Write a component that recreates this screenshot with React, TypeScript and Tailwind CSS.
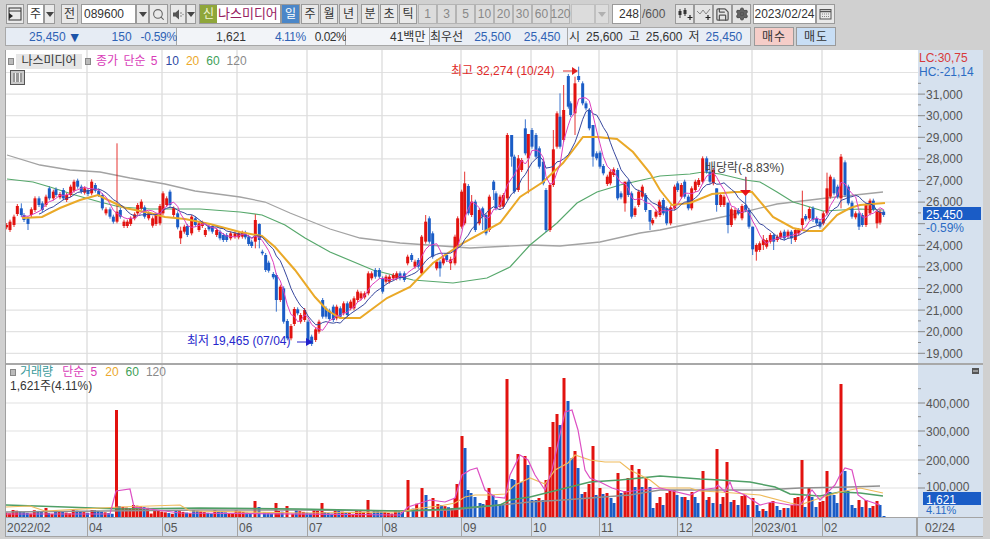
import { Search, Save, Settings } from "lucide-react";
import type { ReactNode } from "react";

type Row = [number, number, number, "r" | "b", number?, number?];

const RED = "#e2120f";
const BLUE = "#1a5cc6";

// candle tables are in 3x zoom coordinates of each chart slice
const LEFT: Row[] = [
  [20, 315, 322, "r"], [30, 305, 330, "r"], [42, 290, 315, "r"], [52, 258, 282, "r"], [64, 265, 285, "b", 250], [72, 285, 300, "b"],
  [84, 295, 312, "b", 290, 330], [94, 268, 285, "r"], [105, 235, 270, "r"], [117, 235, 255, "b"], [127, 250, 270, "b"], [138, 230, 255, "r"],
  [148, 205, 235, "b"], [160, 215, 235, "r"], [168, 208, 225, "b"], [180, 222, 232, "r"], [190, 210, 235, "b"], [200, 225, 240, "r"],
  [212, 200, 225, "r"], [222, 185, 212, "r"], [233, 182, 200, "b"], [244, 200, 215, "b"], [254, 205, 218, "r"], [264, 210, 222, "b"],
  [275, 185, 220, "r", 178], [286, 195, 212, "b"], [296, 212, 225, "b"], [307, 225, 265, "b"], [318, 268, 280, "r"], [330, 268, 290, "b"],
  [340, 290, 305, "b"], [351, 275, 305, "r", 70, 310], [361, 270, 290, "b"], [372, 305, 318, "r"], [382, 305, 318, "r"], [392, 295, 312, "r"],
  [404, 283, 295, "r"], [413, 255, 280, "r"], [424, 245, 265, "r", 238], [434, 262, 290, "b"], [446, 280, 295, "r"], [458, 295, 317, "r"],
  [468, 285, 312, "r"], [480, 258, 310, "r"], [489, 220, 280, "r"], [500, 235, 255, "r"], [510, 215, 255, "b"], [521, 265, 285, "r"],
  [533, 280, 322, "b"], [542, 332, 355, "r", 320, 372], [553, 320, 335, "r"], [562, 318, 345, "b"], [575, 290, 340, "r", 285], [586, 295, 315, "b"],
  [597, 310, 330, "r"], [607, 308, 318, "r"], [616, 330, 345, "r"], [627, 318, 328, "b"], [637, 318, 335, "b"], [650, 330, 345, "r"],
  [660, 335, 355, "b"], [670, 345, 360, "b"], [680, 345, 360, "b"], [692, 340, 355, "r"], [705, 340, 350, "r"], [716, 340, 352, "r"],
  [727, 338, 350, "r"], [736, 338, 352, "b"], [746, 350, 372, "b"], [755, 365, 378, "b"], [766, 300, 365, "r", 283, 385], [778, 312, 360, "b", 310, 385],
  [787, 395, 400, "b"], [797, 405, 450, "b"], [806, 428, 452, "b"], [820, 462, 472, "b"], [829, 465, 540, "b", 460, 575], [841, 500, 540, "r"],
  [851, 505, 605, "b"], [862, 603, 655, "b"], [873, 618, 655, "r"], [883, 567, 612, "r"], [893, 568, 580, "b"], [902, 585, 605, "r"],
  [914, 570, 600, "r"], [924, 605, 660, "b"], [935, 650, 672, "b"], [947, 628, 660, "r"], [957, 605, 635, "r"], [968, 540, 590, "b"],
  [978, 565, 590, "b"], [988, 572, 597, "b"],
];

const MIDDLE: Row[] = [
  [10, 740, 780, "b"], [20, 740, 775, "r"], [31, 745, 770, "b"], [41, 730, 760, "r"], [52, 730, 765, "b"], [62, 725, 745, "r"],
  [72, 715, 745, "r"], [83, 695, 720, "r"], [93, 700, 715, "r"], [104, 700, 712, "r"], [115, 640, 700, "r"], [125, 640, 655, "r"],
  [136, 630, 650, "b"], [148, 630, 650, "b"], [158, 655, 695, "b"], [168, 650, 665, "r"], [178, 650, 665, "r"], [190, 645, 655, "r"],
  [200, 640, 655, "r"], [210, 640, 655, "b"], [223, 640, 660, "b"], [233, 590, 610, "r"], [245, 585, 600, "b"], [255, 605, 620, "r"],
  [265, 600, 620, "b"], [275, 530, 640, "r", 525], [287, 485, 545, "r", 465], [298, 475, 545, "b"], [308, 520, 590, "b"], [320, 605, 625, "r"],
  [330, 605, 625, "b", 600, 650], [340, 595, 610, "r"], [350, 585, 600, "b"], [362, 598, 610, "r", 590, 630], [375, 530, 610, "r"], [383, 475, 560, "r"],
  [395, 395, 500, "r"], [404, 370, 490, "r", 335], [415, 378, 460, "b"], [425, 425, 465, "r", 405], [436, 425, 510, "b"], [448, 450, 490, "r"],
  [458, 445, 470, "b", 440, 510], [468, 465, 520, "b"], [478, 410, 510, "r"], [491, 365, 390, "b", 360, 420], [498, 400, 445, "b"], [510, 410, 440, "r"],
  [520, 405, 440, "r"], [532, 225, 415, "r"], [545, 225, 290, "b", 225, 320], [553, 290, 395, "b"], [565, 295, 390, "r", 285], [575, 300, 330, "r"],
  [586, 205, 280, "b", 178], [595, 222, 295, "r", 222, 400], [606, 210, 260, "b"], [618, 225, 290, "b"], [628, 265, 320, "b"], [640, 305, 370, "b"],
  [648, 390, 510, "b"], [660, 375, 510, "r"], [670, 268, 375, "r", 210], [681, 160, 260, "r"], [690, 170, 260, "b", 100], [701, 150, 240, "r", 75],
  [715, 48, 140, "b"], [722, 130, 165, "b"], [735, 70, 160, "r", 50, 225], [746, 48, 60, "b", 20], [758, 70, 130, "b"], [768, 130, 145, "b"],
  [778, 150, 205, "b"], [789, 195, 290, "b", 195, 320], [800, 280, 295, "b"], [810, 278, 320, "b"], [820, 318, 340, "b"], [832, 350, 372, "r"],
  [841, 335, 370, "r"], [851, 328, 345, "r"], [863, 330, 415, "b"], [873, 400, 412, "b"], [885, 365, 430, "r", 365, 455], [895, 365, 405, "b"],
  [905, 400, 470, "b"], [915, 445, 465, "r"], [926, 395, 435, "r"], [937, 380, 410, "r"], [947, 405, 450, "b"], [960, 450, 485, "b", 450, 510],
  [968, 480, 490, "r"], [978, 455, 470, "r"], [988, 425, 445, "r"],
];

const RIGHT: Row[] = [
  [0, 225, 255, "r"], [10, 210, 250, "b"], [20, 235, 280, "b"], [32, 232, 280, "r"], [44, 170, 235, "r"], [53, 160, 180, "b"],
  [64, 165, 200, "r"], [74, 155, 200, "b"], [85, 200, 235, "b"], [95, 175, 235, "r"], [106, 155, 180, "r"], [116, 150, 165, "r"],
  [128, 85, 155, "r"], [140, 85, 125, "b"], [150, 125, 155, "b"], [160, 120, 160, "r"], [170, 175, 225, "b", 175, 245], [182, 195, 225, "r"],
  [192, 200, 225, "r"], [204, 218, 285, "b", 218, 310], [214, 238, 285, "r"], [225, 240, 265, "r"], [235, 240, 250, "b"], [246, 228, 265, "r"],
  [257, 225, 240, "b", 140], [267, 240, 290, "b"], [278, 290, 358, "b", 290, 375], [289, 345, 365, "r", 340, 392], [299, 340, 360, "r"], [310, 328, 345, "r", 315, 360],
  [320, 330, 350, "r"], [331, 315, 335, "r"], [341, 315, 335, "b", 310, 360], [352, 320, 330, "r"], [362, 308, 322, "r"], [373, 305, 325, "b"],
  [384, 305, 318, "r"], [394, 305, 325, "b", 300, 342], [406, 300, 330, "r"], [416, 300, 310, "r"], [427, 265, 285, "r", 182, 300], [437, 258, 268, "b"],
  [448, 237, 265, "r"], [459, 235, 270, "b"], [470, 265, 280, "b"], [480, 275, 290, "b"], [490, 250, 280, "r"], [501, 175, 250, "r", 128],
  [511, 140, 200, "r"], [522, 148, 190, "b"], [533, 170, 200, "b"], [543, 80, 205, "r", 72, 235], [555, 97, 195, "b"], [565, 170, 220, "b"],
  [576, 218, 260, "b"], [587, 250, 262, "r"], [597, 250, 290, "b", 245, 300], [607, 255, 285, "b"], [618, 225, 285, "r"], [630, 212, 250, "r"],
  [640, 212, 238, "b"], [651, 245, 280, "r", 240, 295], [660, 245, 278, "r"], [671, 245, 255, "b"],
];

const toPx = (rows: Row[], ox: number, oy: number) =>
  rows.map(([z, top, bot, c, hi, lo]) => ({
    x: ox + z / 3,
    top: oy + top / 3,
    bot: oy + bot / 3,
    hi: oy + (hi ?? top - 6) / 3,
    lo: oy + (lo ?? bot + 6) / 3,
    c,
  }));

const CANDLES = [...toPx(LEFT, 0, 120), ...toPx(MIDDLE, 330, 60), ...toPx(RIGHT, 660, 130)];

function movingAverage(n: number) {
  const closes = CANDLES.map((k) => (k.c === "r" ? k.top : k.bot));
  const pts: string[] = [];
  closes.forEach((_, i) => {
    if (i < n - 1) return;
    const win = closes.slice(i - n + 1, i + 1);
    const avg = win.reduce((a, b) => a + b, 0) / n;
    pts.push(`${CANDLES[i].x.toFixed(1)},${avg.toFixed(1)}`);
  });
  return pts.join(" ");
}

const MA20 =
  "22,218 42,217 60,208 80,200 98,195 108,200 125,208 150,213 165,217 185,219 210,224 240,232 262,236 275,247 295,270 315,297 327,310 340,318 360,318 387,298 410,287 433,263 463,243 500,223 520,197 543,182 563,163 583,137 597,137 617,139 633,152 650,173 660,190 672,205 690,203 712,194 735,192 752,192 773,217 793,228 807,231 822,231 837,215 850,208 860,205 885,203";
const MA60 =
  "7,179 33,182 50,187 75,195 100,202 120,207 150,209 200,209 240,212 262,215 285,225 305,238 330,252 373,270 413,280 453,283 487,278 510,267 530,245 557,223 577,203 597,192 620,185 660,176 690,174 703,172 720,174 745,180 760,182 777,192 793,202 810,207 823,211 860,209 883,210";
const MA120 =
  "7,155 40,165 70,170 100,172 130,178 165,184 195,191 240,197 265,202 290,213 330,229 360,238 400,243 470,248 530,245 560,246 600,242 640,233 660,230 727,216 777,204 827,198 883,192";

const VOL_MA5 =
  "6,514 110,514 116,491 130,489 134,507 180,513 400,515 408,507 430,500 445,502 455,498 462,475 470,470 477,468 485,490 495,497 505,498 510,475 520,455 528,460 535,475 545,490 552,470 565,412 572,410 578,430 585,470 590,478 600,482 612,488 625,492 640,490 660,488 690,495 700,490 715,488 718,485 725,492 730,482 733,490 745,495 760,505 772,502 790,505 800,505 812,490 820,500 835,485 840,475 845,468 852,470 858,495 865,500 880,505";
const VOL_MA20 =
  "6,507 30,506 45,511 120,507 180,505 190,511 300,513 400,512 420,508 440,506 455,503 465,497 475,495 490,495 505,494 515,485 530,478 545,484 555,470 568,463 575,455 590,460 605,462 620,462 630,470 650,480 660,488 690,488 700,491 720,492 760,495 790,503 800,505 820,498 840,492 860,488 883,493";
const VOL_MA60 =
  "6,505 65,507 120,509 200,508 300,509 400,511 450,509 500,505 510,500 530,497 570,487 590,482 620,480 660,476 700,479 720,480 750,482 775,487 790,494 820,496 840,492 860,493 883,496";
const VOL_MA120 =
  "6,512 200,510 300,510 400,511 450,510 500,505 530,502 563,500 630,495 660,490 760,490 800,488 850,487 880,486";

// [x, top of bar, colour] read from the volume pane
const BIG_VOL: [number, number, "r" | "b"][] = [
  [116.5, 410, "r"], [46, 508, "r"], [92, 510, "r"], [255, 501, "r"], [259, 507, "b"], [276, 503, "r"], [287, 506, "r"], [322, 503, "r"],
  [368, 500, "r"], [408, 480, "r"], [422, 488, "r"], [426, 495, "b"], [433, 498, "r"], [455, 498, "r"], [457, 484, "r"], [462, 436, "r"], [465, 448, "b"],
  [468, 490, "b"], [471, 493, "b"], [475, 497, "b"], [480, 503, "b"], [483, 504, "b"], [487, 500, "r"], [489, 488, "r"], [493, 495, "b"], [496, 500, "b"],
  [500, 504, "b"], [503, 505, "b"], [507, 379, "r"], [512, 479, "b"], [514, 480, "b"], [518, 454, "r"], [521, 482, "b"], [525, 456, "r"], [528, 465, "b"],
  [532, 500, "b"], [536, 500, "b"], [539, 498, "r"], [543, 500, "b"], [546, 480, "r"], [550, 447, "r"], [553, 422, "r"], [557, 414, "r"], [560, 425, "b"],
  [564, 378, "r"], [568, 401, "b"], [572, 458, "b"], [575, 451, "r"], [578, 468, "b"], [582, 494, "b"], [585, 492, "r"], [589, 484, "r"], [593, 446, "r"],
  [596, 495, "b"], [600, 488, "r"], [603, 494, "b"], [607, 493, "r"], [611, 498, "b"], [614, 503, "b"], [618, 473, "r"], [621, 493, "b"], [625, 491, "r"],
  [628, 478, "r"], [632, 465, "r"], [635, 487, "b"], [639, 469, "r"], [642, 487, "b"], [646, 477, "r"], [650, 487, "b"], [653, 508, "b"], [657, 503, "r"],
  [660, 497, "r"], [663, 505, "b"], [667, 493, "r"], [670, 490, "r"], [674, 490, "r"], [677, 495, "b"], [682, 497, "b"], [685, 497, "r"], [688, 500, "b"],
  [692, 492, "r"], [695, 497, "b"], [698, 503, "b"], [703, 471, "r"], [707, 500, "b"], [709, 497, "r"], [713, 503, "b"], [717, 449, "r"], [721, 504, "b"],
  [723, 497, "r"], [727, 462, "r"], [731, 502, "b"], [734, 500, "r"], [738, 505, "b"], [742, 496, "r"], [745, 495, "r"], [748, 505, "b"], [753, 498, "r"],
  [757, 505, "b"], [759, 511, "b"], [763, 509, "r"], [766, 511, "b"], [770, 503, "r"], [773, 501, "r"], [777, 506, "b"], [780, 510, "b"], [784, 508, "r"],
  [788, 508, "b"], [792, 505, "r"], [795, 498, "r"], [798, 497, "r"], [802, 460, "r"], [805, 507, "b"], [809, 488, "r"], [812, 497, "b"], [816, 507, "b"],
  [820, 502, "r"], [823, 501, "r"], [827, 471, "r"], [830, 492, "b"], [834, 495, "b"], [837, 503, "b"], [841, 384, "r"], [845, 471, "b"], [848, 491, "b"],
  [852, 505, "b"], [855, 508, "b"], [859, 500, "r"], [862, 507, "b"], [866, 500, "r"], [870, 508, "b"], [873, 506, "r"], [877, 501, "r"], [880, 505, "b"],
  [884, 516, "b"],
];

const nearestColor = (x: number) =>
  CANDLES.reduce((best, k) => (Math.abs(k.x - x) < Math.abs(best.x - x) ? k : best), CANDLES[0]).c;

// the small bars between the ones read by hand
const FILLER = Array.from({ length: 249 }, (_, i) => {
  const x = 6 + i * 3.54;
  const noise = ((i * 37 + 11) % 17) / 17;
  let top = 510 + noise * 4;
  if (x > 118 && x < 150) top = 505 + noise * 4;
  if (x > 410 && x < 460) top = 503 + noise * 6;
  if (x > 460) top = 498 + noise * 8;
  return { x, top, c: nearestColor(x) };
}).filter((b) => b.x < 884 && !BIG_VOL.some(([x]) => Math.abs(x - b.x) < 2.2));

const VOLUMES = [...FILLER, ...BIG_VOL.map(([x, top, c]) => ({ x, top, c }))];

const VERTICALS = [87, 162, 237, 307, 382, 461, 531, 599, 677, 752, 822];
const PRICE_LINES = Array.from({ length: 14 }, (_, i) => ({ v: 32 - i, y: 72.5 + i * 21.6 }));
const VOL_LINES = [
  { label: "400,000", y: 403, text: 407.5 },
  { label: "300,000", y: 431, text: 435.5 },
  { label: "200,000", y: 460, text: 464.5 },
  { label: "100,000", y: 488, text: 490.5 },
];
const DATES = [
  { x: 87, t: "04" }, { x: 162, t: "05" }, { x: 237, t: "06" }, { x: 307, t: "07" }, { x: 382, t: "08" }, { x: 461, t: "09" },
  { x: 531, t: "10" }, { x: 599, t: "11" }, { x: 677, t: "12" }, { x: 752, t: "2023/01" }, { x: 822, t: "02" },
];

function Btn({ className, children }: { className: string; children?: ReactNode }) {
  return (
    <div className={`h-[20px] shrink-0 flex items-center justify-center border border-[#9a9a9a] bg-[#e9e9e9] text-[#333] text-[12px] leading-none ${className}`}>
      {children}
    </div>
  );
}

function Caret({ light }: { light?: boolean }) {
  return (
    <svg width="8" height="5" viewBox="0 0 8 5">
      <path d="M0 0h8L4 5z" fill={light ? "#b0b0b0" : "#444"} />
    </svg>
  );
}

function Toolbar() {
  return (
    <div className="h-[27px] pl-[6px] pt-[4px] flex items-start">
      <Btn className="w-[18px]">
        <svg width="14" height="14" viewBox="0 0 14 14" fill="none">
          <rect x="1" y="1" width="12" height="12" stroke="#333" />
          <path d="M1 4h12" stroke="#333" />
          <path d="M1 6l4 3-4 3z" fill="#222" />
        </svg>
      </Btn>
      <Btn className="w-[17px] ml-[3px] !bg-white">주</Btn>
      <Btn className="w-[11px]"><Caret /></Btn>
      <Btn className="w-[17px] ml-[6px]">전</Btn>
      <Btn className="w-[55px] ml-[3px] !bg-white !justify-start pl-[2px] text-[#222]">089600</Btn>
      <Btn className="w-[13px]"><Caret /></Btn>
      <Btn className="w-[19px]"><Search size={13} color="#666" /></Btn>
      <Btn className="w-[16px] ml-[2px]">
        <svg width="13" height="13" viewBox="0 0 13 13">
          <path d="M1 4.5h2.5L7 1.5v10L3.500 8.500H1z" fill="#555" />
          <circle cx="9" cy="5" r="0.8" fill="#777" /><circle cx="9" cy="8" r="0.8" fill="#777" /><circle cx="11" cy="6.500" r="0.8" fill="#999" />
        </svg>
      </Btn>
      <Btn className="w-[10px]"><Caret /></Btn>
      <div className="h-[20px] ml-[3px] flex border border-[#9a9a9a] shrink-0">
        <div className="w-[17px] bg-[#8fa63a] text-[#f2f6d8] text-[12px] flex items-center justify-center">신</div>
        <div className="w-[63px] bg-white text-[#97205f] text-[13px] flex items-center pl-[1px] overflow-hidden whitespace-nowrap">나스미디어</div>
      </div>
      <Btn className="w-[19px] !bg-[#4a86c8] !text-white">일</Btn>
      <Btn className="w-[18px] ml-[1px]">주</Btn>
      <Btn className="w-[18px] ml-[1px]">월</Btn>
      <Btn className="w-[19px] ml-[1px]">년</Btn>
      <Btn className="w-[18px] ml-[3px]">분</Btn>
      <Btn className="w-[18px] ml-[1px]">초</Btn>
      <Btn className="w-[18px] ml-[1px]">틱</Btn>
      <div className="w-[1px] shrink-0" />
      {["1", "3", "5", "10", "20", "30", "60", "120"].map((n) => (
        <Btn key={n} className="w-[19px] !text-[#888] !bg-[#dcdcdc] !border-[#b4b4b4]">{n}</Btn>
      ))}
      <Btn className="w-[24px] ml-[1px] !bg-[#dcdcdc] !border-[#c0c0c0]" />
      <Btn className="w-[14px] !bg-[#dcdcdc] !border-[#c0c0c0]"><Caret light /></Btn>
      <Btn className="w-[29px] ml-[3px] !bg-white !justify-end pr-[1px] text-[#222]">248</Btn>
      <div className="w-[34px] h-[20px] pl-[1px] text-[12px] text-[#555] flex items-center shrink-0">/600</div>
      <Btn className="w-[19px] !bg-[#e4e4e4]">
        <svg width="16" height="14" viewBox="0 0 16 14">
          <path d="M3 2v9M8 1v8" stroke="#333" />
          <rect x="1.500" y="4" width="3" height="4" fill="#333" /><rect x="6.500" y="3" width="3" height="4" fill="#333" />
          <path d="M13 8v5M10.500 10.500h5" stroke="#222" strokeWidth="1.200" />
        </svg>
      </Btn>
      <Btn className="w-[19px] !bg-[#e4e4e4]">
        <svg width="16" height="14" viewBox="0 0 16 14" fill="none">
          <path d="M1 4l3 3 3-4 3 4 4-5" stroke="#888" />
          <path d="M12 8v5M9.500 10.500h5" stroke="#222" strokeWidth="1.200" />
        </svg>
      </Btn>
      <Btn className="w-[19px] !bg-[#e4e4e4]"><Save size={15} color="#555" /></Btn>
      <Btn className="w-[19px] !bg-[#e4e4e4]"><Settings size={14} color="#555" fill="#666" /></Btn>
      <Btn className="w-[63px] ml-[2px] !bg-white text-[#222]">2023/02/24</Btn>
      <Btn className="w-[19px]">
        <svg width="13" height="12" viewBox="0 0 13 12" fill="none">
          <rect x="1" y="1.500" width="11" height="9.500" stroke="#555" />
          <path d="M1 3.500h11" stroke="#555" strokeWidth="1.500" />
          <path d="M3 6h7M3 8.500h7" stroke="#888" strokeDasharray="1 1" />
        </svg>
      </Btn>
    </div>
  );
}

function Cell({ className, children }: { className: string; children: ReactNode }) {
  return <div className={`h-full flex items-center whitespace-pre border-r border-[#a8a8a8] ${className}`}>{children}</div>;
}

function Quotes() {
  return (
    <div className="h-[20px] pl-[5px] flex text-[12px] text-[#333]">
      <div className="w-[746px] h-[19px] flex border border-[#a8a8a8] bg-[#e9eef5]">
        <Cell className="w-[171px] bg-[#e6ecf4] text-[#2f62b4]">
          <span className="ml-[23px]">25,450</span>
          <span className="ml-[2px] text-[#1c54a8] text-[14px] leading-none">▼</span>
          <span className="ml-[30px]">150</span>
          <span className="ml-[9px] tracking-[-0.3px]">-0.59%</span>
        </Cell>
        <Cell className="w-[169px] bg-[#f2f4f8]">
          <span className="ml-[39px]">1,621</span>
          <span className="ml-[29px] text-[#2f62b4] tracking-[-0.5px]">4.11%</span>
          <span className="ml-[9px] tracking-[-0.5px]">0.02%</span>
        </Cell>
        <Cell className="w-[84px] bg-[#f2f4f8]"><span className="ml-[44px]">41백만</span></Cell>
        <Cell className="w-[138px]">
          <span>최우선</span>
          <span className="ml-[11px] text-[#2f62b4]">25,500</span>
          <span className="ml-[13px] text-[#2f62b4]">25,450</span>
        </Cell>
        <div className="flex-1 h-full flex items-center whitespace-pre">
          <span className="ml-[1px]">시</span>
          <span className="ml-[6px]">25,600</span>
          <span className="ml-[6px]">고</span>
          <span className="ml-[6px]">25,600</span>
          <span className="ml-[6px]">저</span>
          <span className="ml-[6px] text-[#2f62b4]">25,450</span>
        </div>
      </div>
      <div className="ml-[3px] w-[40px] h-[19px] flex items-center justify-center border border-[#9a9a9a] bg-[#f5cdc8] tracking-[1px]">매수</div>
      <div className="ml-[2px] w-[40px] h-[19px] flex items-center justify-center border border-[#9a9a9a] bg-[#c8def5] tracking-[1px]">매도</div>
    </div>
  );
}

function Dot() {
  return <span className="inline-block w-[6px] h-[7px] bg-[#bbb] border border-[#888]" />;
}

function PriceChart() {
  return (
    <svg width="912" height="313" viewBox="6 50 912 313" className="block">
      {PRICE_LINES.map((l) => (
        <line key={l.v} x1="6" x2="918" y1={l.y} y2={l.y} stroke="#e2e2e2" strokeWidth="1.200" />
      ))}
      {VERTICALS.map((x) => (
        <line key={x} x1={x} x2={x} y1="50" y2="363" stroke="#dedede" strokeWidth="1.400" />
      ))}
      <polyline points={MA120} fill="none" stroke="#a3a3a3" strokeWidth="1.300" />
      <polyline points={MA60} fill="none" stroke="#57a86c" strokeWidth="1.200" />
      {CANDLES.map((k) => {
        const color = k.c === "r" ? RED : BLUE;
        return (
          <g key={k.x}>
            <line x1={k.x} x2={k.x} y1={k.hi} y2={k.lo} stroke={color} strokeWidth="1" opacity="0.85" />
            <rect x={k.x - 1.5} y={k.top} width="3" height={Math.max(k.bot - k.top, 1.500)} fill={color} />
          </g>
        );
      })}
      <polyline points={MA20} fill="none" stroke="#eaa928" strokeWidth="2" />
      <polyline points={movingAverage(10)} fill="none" stroke="#38489e" strokeWidth="1" />
      <polyline points={movingAverage(5)} fill="none" stroke="#dd3fbf" strokeWidth="1" />
      <text x="451" y="75" fontSize="12" fill="#e02a2a">최고 32,274 (10/24)</text>
      <path d="M563 71h9" stroke="#e02a2a" />
      <path d="M572 67l6 4-6 4z" fill="#e02020" />
      <text x="187" y="345" fontSize="12" fill="#2626cc">최저 19,465 (07/04)</text>
      <path d="M297 342h10" stroke="#2626cc" />
      <path d="M306 338l7 4-7 4z" fill="#2020cc" />
      <text x="705" y="172" fontSize="12" fill="#444">배당락(-8.83%)</text>
      <path d="M746 177v13" stroke="#e02a2a" />
      <path d="M740 190h11l-5.500 6z" fill="#e8141a" />
    </svg>
  );
}

function VolumeChart() {
  return (
    <svg width="912" height="152" viewBox="6 365 912 152" className="block">
      {VOL_LINES.map((l) => (
        <line key={l.y} x1="6" x2="918" y1={l.y} y2={l.y} stroke="#e2e2e2" strokeWidth="1.200" />
      ))}
      {VERTICALS.map((x) => (
        <line key={x} x1={x} x2={x} y1="365" y2="517" stroke="#dedede" strokeWidth="1.400" />
      ))}
      {VOLUMES.map((b) => (
        <rect key={b.x} x={b.x - 1.5} y={b.top} width="3" height={517 - b.top} fill={b.c === "r" ? RED : BLUE} />
      ))}
      <polyline points={VOL_MA120} fill="none" stroke="#909090" strokeWidth="1.500" />
      <polyline points={VOL_MA60} fill="none" stroke="#4f9f66" strokeWidth="1.500" />
      <polyline points={VOL_MA20} fill="none" stroke="#efbb5c" strokeWidth="1.200" />
      <polyline points={VOL_MA5} fill="none" stroke="#dd50c4" strokeWidth="1.200" />
    </svg>
  );
}

function PriceAxis() {
  return (
    <svg width="65" height="313" viewBox="918 50 65 313" className="block">
      <text x="919" y="62" fontSize="12" fill="#d83a3a">LC:30,75</text>
      <text x="919" y="76" fontSize="12" fill="#2c6cc4">HC:-21,14</text>
      {PRICE_LINES.slice(1).map((l) => (
        <g key={l.v} stroke="#888">
          <line x1="918" x2="925" y1={l.y} y2={l.y} />
          <line x1="918" x2="921" y1={l.y - 10.8} y2={l.y - 10.8} />
        </g>
      ))}
      {PRICE_LINES.slice(1)
        .filter((l) => l.v !== 25)
        .map((l) => (
          <text key={l.v} x="926" y={l.v === 26 ? l.y + 3.5 : l.y + 4.5} fontSize="12" fill="#555">{`${l.v},000`}</text>
        ))}
      <rect x="923" y="207" width="58" height="13" fill="#1a5cc6" />
      <text x="926" y="219" fontSize="12" fill="#fff">25,450</text>
      <text x="926" y="232" fontSize="12" fill="#2c6cc4">-0.59%</text>
    </svg>
  );
}

function VolumeAxis() {
  return (
    <svg width="65" height="152" viewBox="918 365 65 152" className="block">
      <rect x="972" y="368" width="7" height="6" fill="#555" />
      <path d="M973 371h5" stroke="#ddd" />
      {VOL_LINES.map((l) => (
        <g key={l.y} stroke="#888">
          <line x1="918" x2="925" y1={l.y} y2={l.y} />
          <line x1="918" x2="921" y1={l.y - 14.300} y2={l.y - 14.300} />
        </g>
      ))}
      {VOL_LINES.map((l) => (
        <text key={l.y} x="926" y={l.text} fontSize="12" fill="#555">{l.label}</text>
      ))}
      <rect x="923" y="492" width="58" height="13" fill="#1a5cc6" />
      <text x="926" y="504" fontSize="12" fill="#fff">1,621</text>
      <text x="926" y="514" fontSize="11" fill="#2c6cc4">4.11%</text>
    </svg>
  );
}

function DateAxis() {
  return (
    <div className="h-[20px] flex text-[12px] text-[#555] border-y border-[#a4a4a4] bg-[#d6e1ee]">
      <div className="relative w-[912px] border-r-2 border-[#a4a4a4]">
        <span className="absolute left-[1px] top-[1px]">2022/02</span>
        {DATES.map((d) => (
          <span key={d.x} className="absolute top-0 h-full border-l border-[#a4a4a4] pl-[1px] pt-[1px]" style={{ left: d.x - 6 }}>
            {d.t}
          </span>
        ))}
      </div>
      <div className="w-[65px] pl-[7px] pt-[1px]">02/24</div>
    </div>
  );
}

export default function App() {
  return (
    <div className="w-[990px] h-[539px] bg-[#d0d0d0] overflow-hidden [font-family:'Liberation_Sans','Noto_Sans_CJK_KR',sans-serif]">
      <Toolbar />
      <Quotes />
      <div className="mt-[3px] flex">
        <div className="w-[6px] border-r border-[#a0a0a0]" />
        <div className="w-[977px] flex flex-col">
          <div className="flex h-[313px]">
            <div className="relative bg-white">
              <PriceChart />
              <div className="absolute left-[2px] top-[2px] flex items-center text-[12px] whitespace-pre">
                <Dot />
                <span className="ml-[2px] w-[66px] h-[15px] leading-[15px] text-center bg-[#e6e6e6] text-[#333]">나스미디어</span>
                <span className="ml-[3px]"><Dot /></span>
                <span className="ml-[5px] text-[#d93cb8] [word-spacing:2px]">종가 단순 5</span>
                <span className="ml-[8px] text-[#2d4aa5]">10</span>
                <span className="ml-[7px] text-[#eca92c]">20</span>
                <span className="ml-[7px] text-[#3f9f58]">60</span>
                <span className="ml-[7px] text-[#8a8a8a]">120</span>
              </div>
              <div className="absolute left-[4px] top-[20px] w-[15px] h-[15px] bg-[#c9c9c9] border border-[#555] p-[2px]">
                <div className="h-full w-full grid grid-cols-3 gap-[1px] bg-[#f3f3f3]">
                  <div className="bg-[#999]" /><div className="bg-[#999]" /><div className="bg-[#999]" />
                </div>
              </div>
            </div>
            <div className="bg-[#d6e1ee]">
              <PriceAxis />
            </div>
          </div>
          <div className="h-[2px] bg-[#a8a8a8]" />
          <div className="flex h-[152px]">
            <div className="relative bg-white">
              <VolumeChart />
              <div className="absolute left-[4px] top-[0px] text-[12px] leading-[14px] whitespace-pre">
                <div className="flex items-center">
                  <Dot />
                  <span className="ml-[4px] text-[#3a9a9a]">거래량</span>
                  <span className="ml-[9px] text-[#d93cb8] [word-spacing:3px]">단순 5</span>
                  <span className="ml-[8px] text-[#eca92c]">20</span>
                  <span className="ml-[7px] text-[#3f9f58]">60</span>
                  <span className="ml-[7px] text-[#8a8a8a]">120</span>
                </div>
                <div className="text-[#333]">1,621주(4.11%)</div>
              </div>
            </div>
            <div className="bg-[#d6e1ee]">
              <VolumeAxis />
            </div>
          </div>
          <DateAxis />
        </div>
      </div>
    </div>
  );
}
